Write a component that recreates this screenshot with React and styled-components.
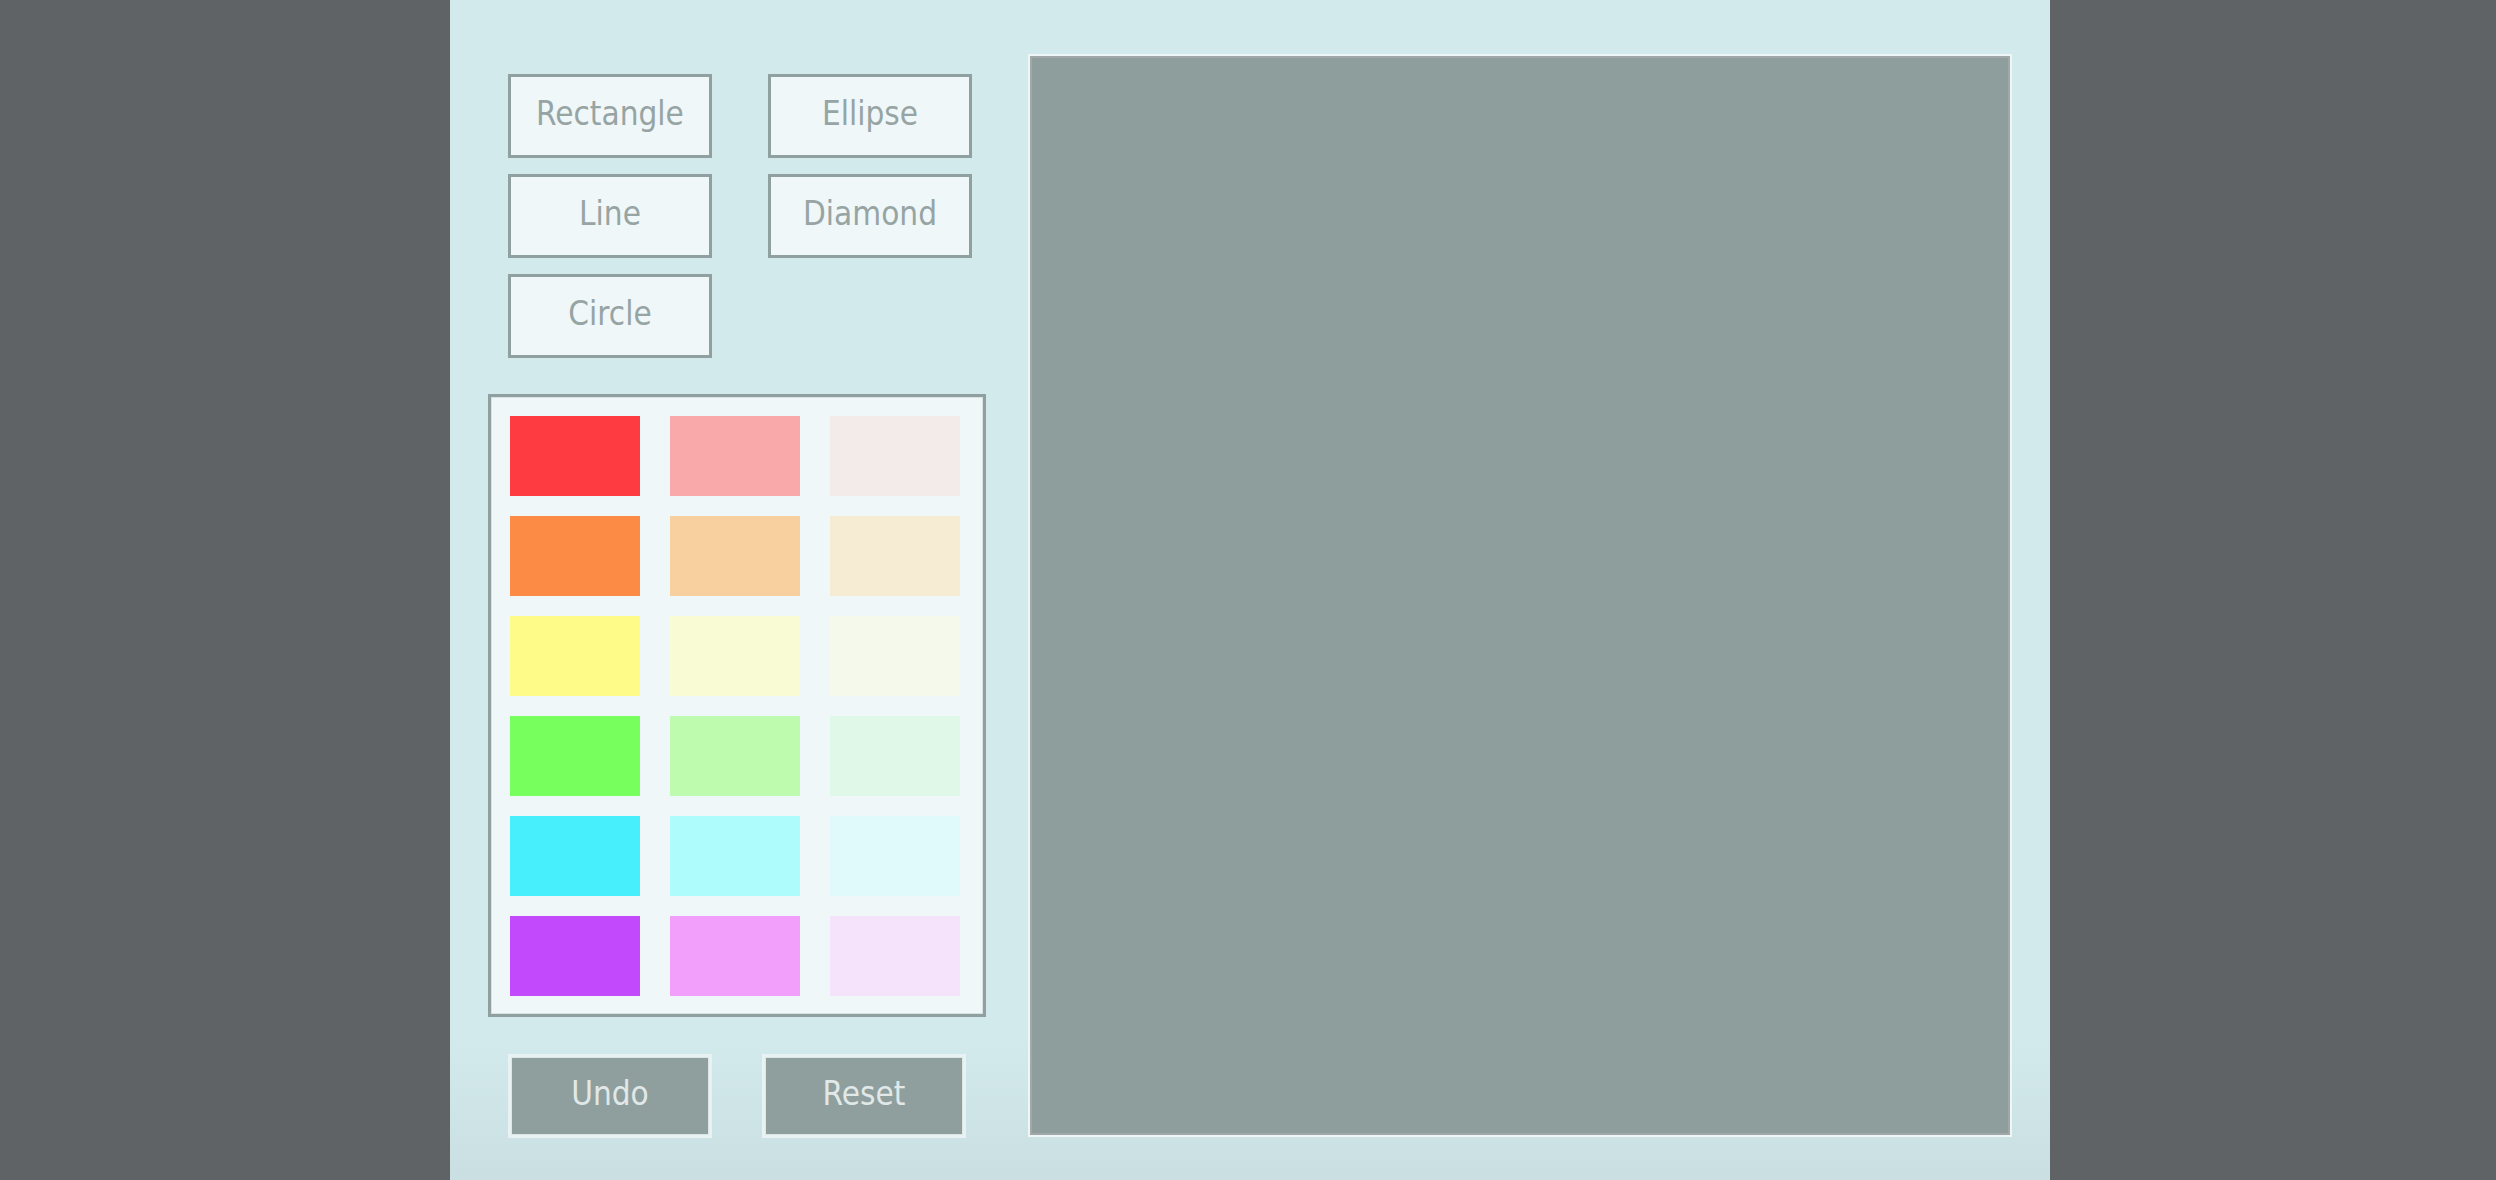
import styled, { createGlobalStyle } from "styled-components";

const GlobalStyle = createGlobalStyle`
  html, body {
    margin: 0;
    padding: 0;
    background: #5f6366;
  }
  body {
    font-family: "DejaVu Sans", Verdana, sans-serif;
  }
`;

const Page = styled.div`
  min-height: 100vh;
  padding-left: 4px;
  background: #5f6366;
`;

const Panel = styled.div`
  width: 1600px;
  height: 1180px;
  margin: 0 auto;
  box-sizing: border-box;
  padding: 54px 38px 0 38px;
  display: flex;
  gap: 42px;
  background: linear-gradient(
    to bottom,
    #d3eaec 0%,
    #d3eaec 88%,
    #c9dfe1 100%
  );
`;

const Sidebar = styled.div`
  width: 498px;
  display: flex;
  flex-direction: column;
`;

const ShapeGrid = styled.div`
  display: grid;
  grid-template-columns: repeat(2, 204px);
  grid-auto-rows: 84px;
  column-gap: 56px;
  row-gap: 16px;
  margin: 20px 0 0 20px;
`;

const Label = styled.span`
  font-family: "DejaVu Sans Condensed", "DejaVu Sans", Verdana, sans-serif;
  font-stretch: semi-condensed;
  font-size: 33px;
  line-height: 1;
  white-space: nowrap;
`;

const ShapeButton = styled.button`
  box-sizing: border-box;
  width: 204px;
  height: 84px;
  padding: 0 0 5px;
  border: 3px solid #909fa0;
  background: #eff7f9;
  color: #97a4a4;
  display: flex;
  align-items: center;
  justify-content: center;
  cursor: pointer;
`;

const Palette = styled.div`
  box-sizing: border-box;
  width: 498px;
  height: 623px;
  margin-top: 36px;
  padding: 19px 23px 18px 19px;
  border: 3px solid #909fa0;
  box-shadow: inset 0 0 0 1px #d9e2e3;
  background: #eff7f9;
  display: grid;
  grid-template-columns: repeat(3, 130px);
  grid-auto-rows: 80px;
  column-gap: 30px;
  row-gap: 20px;
  align-content: start;
`;

const Swatch = styled.div`
  background: ${(p) => p.$color};
  cursor: pointer;
`;

const ActionRow = styled.div`
  display: flex;
  gap: 50px;
  margin: 37px 0 0 20px;
`;

const ActionButton = styled.button`
  box-sizing: border-box;
  width: 204px;
  height: 84px;
  padding: 0 0 5px;
  border: 3px solid #e9f2f3;
  box-shadow: inset 0 0 0 1px #dde6e7;
  background: #8f9f9e;
  color: #e1e8e8;
  display: flex;
  align-items: center;
  justify-content: center;
  cursor: pointer;
`;

const Canvas = styled.div`
  box-sizing: border-box;
  width: 984px;
  height: 1083px;
  border: 2px solid #eef6f7;
  box-shadow: inset 0 0 0 2px #a0a8a8;
  background: #8e9e9d;
`;

const shapes = ["Rectangle", "Ellipse", "Line", "Diamond", "Circle"];

const colors = [
  "#ff3b42", "#faa9ab", "#f3eaea",
  "#fc8b45", "#f8d09f", "#f5ecd3",
  "#fffb88", "#f8fbd3", "#f4f9ec",
  "#76ff5d", "#bffbae", "#e0f8e8",
  "#47eefc", "#aefcfc", "#e0fafb",
  "#c249fc", "#f29ffb", "#f4e3fa",
];

export default function App() {
  return (
    <Page>
      <GlobalStyle />
      <Panel>
        <Sidebar>
          <ShapeGrid>
            {shapes.map((s) => (
              <ShapeButton key={s}>
                <Label>{s}</Label>
              </ShapeButton>
            ))}
          </ShapeGrid>
          <Palette>
            {colors.map((c) => (
              <Swatch key={c} $color={c} />
            ))}
          </Palette>
          <ActionRow>
            <ActionButton>
              <Label>Undo</Label>
            </ActionButton>
            <ActionButton>
              <Label>Reset</Label>
            </ActionButton>
          </ActionRow>
        </Sidebar>
        <Canvas />
      </Panel>
    </Page>
  );
}
